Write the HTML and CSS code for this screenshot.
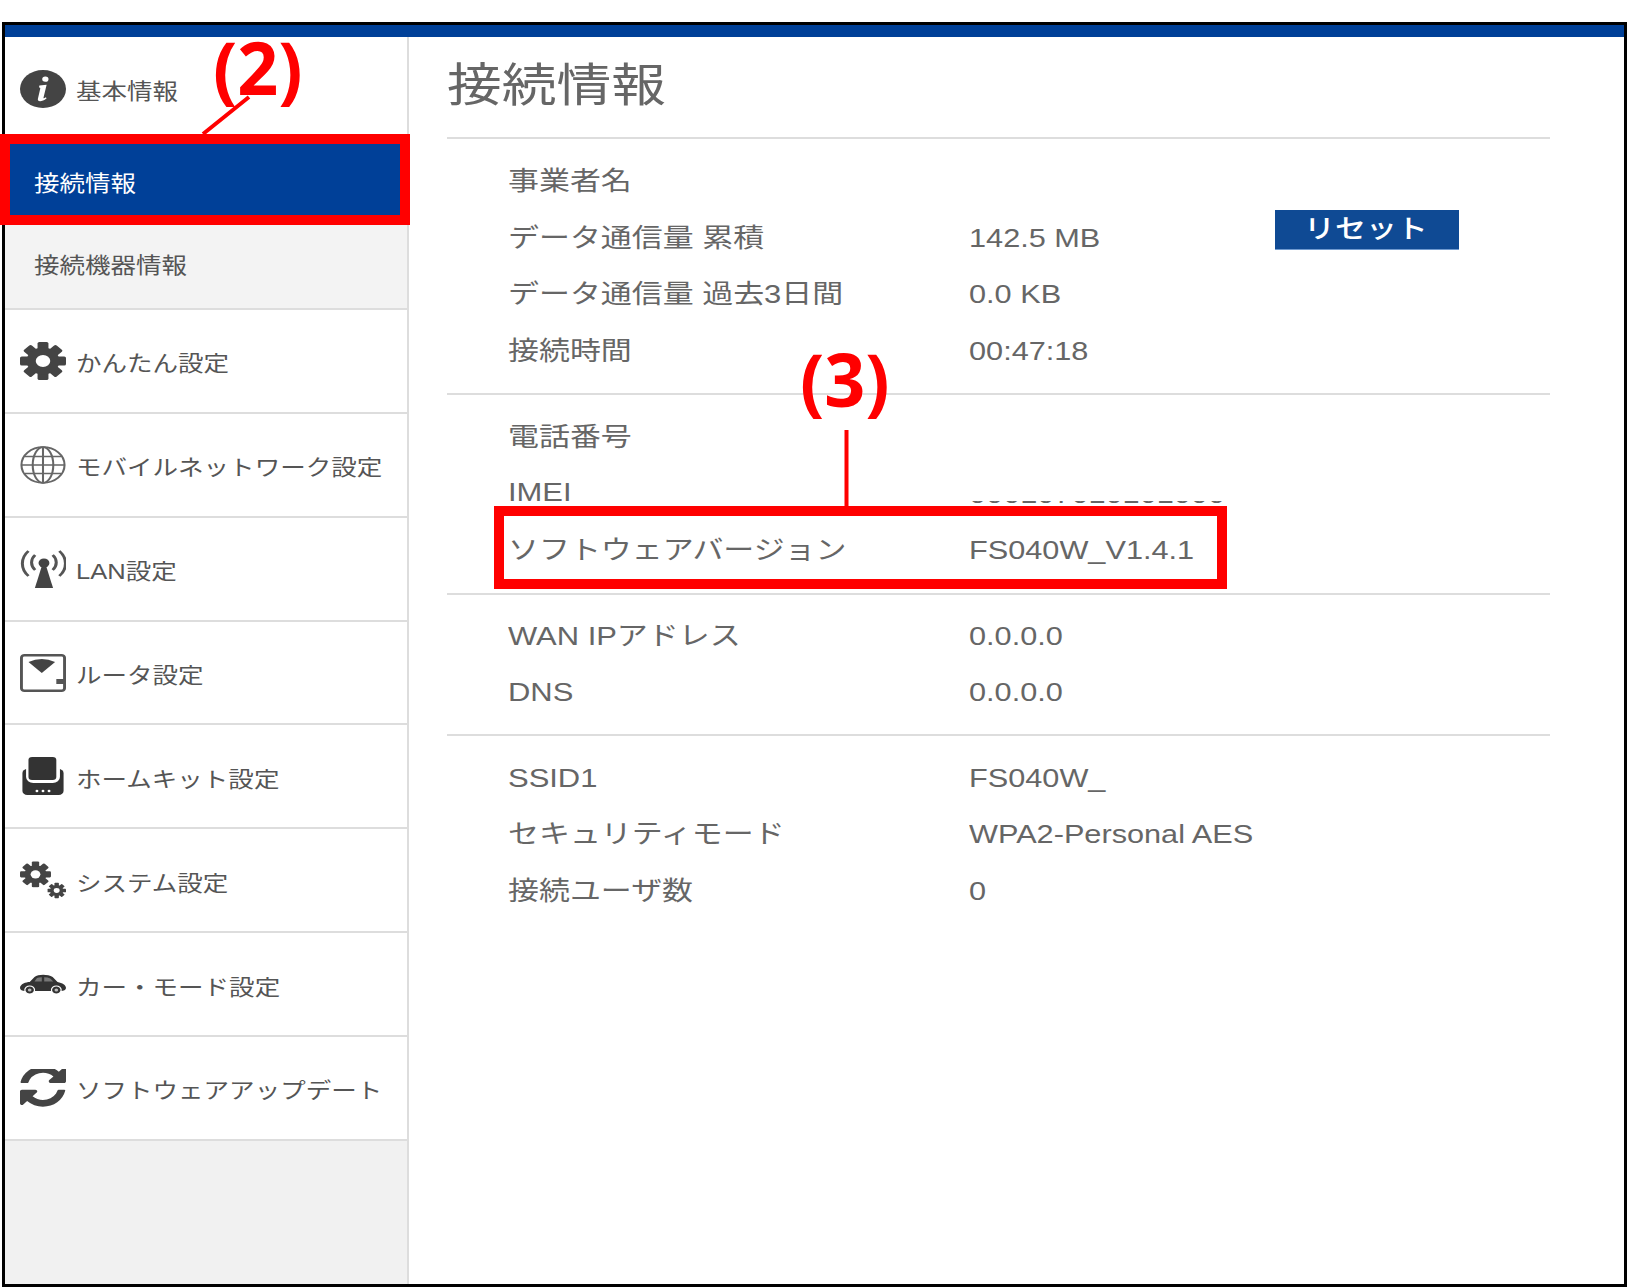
FILE: index.html
```html
<!DOCTYPE html>
<html lang="ja">
<head>
<meta charset="utf-8">
<title>接続情報</title>
<link rel="stylesheet" href="styles.css">
</head>
<body>
<svg class="defs" aria-hidden="true">
  <symbol id="gear" viewBox="0 0 38 38">
    <g fill="#444">
      <rect x="14.5" y="0" width="9" height="38" rx="1.5"/>
      <rect x="14.5" y="0" width="9" height="38" rx="1.5" transform="rotate(45 19 19)"/>
      <rect x="14.5" y="0" width="9" height="38" rx="1.5" transform="rotate(90 19 19)"/>
      <rect x="14.5" y="0" width="9" height="38" rx="1.5" transform="rotate(135 19 19)"/>
      <circle cx="19" cy="19" r="13.5"/>
    </g>
    <circle cx="19" cy="19" r="6" fill="#fff"/>
  </symbol>
</svg>

<div class="frame">
  <div class="topbar"></div>
  <div class="body">
    <nav class="side">
      <ul class="menu">
        <li class="item first">
          <svg class="ico" viewBox="0 0 38 38" preserveAspectRatio="none"><circle cx="19" cy="19" r="19" fill="#444"/><path d="M21 6.500a2.600 2.600 0 1 1-.1 5.200 2.600 2.600 0 0 1 .1-5.200zM16 15.500l6-.8-2.600 13c-.1.700.5.800 1.900-.4l.7.900c-2 2.300-4 3-5.400 3-1.500 0-2.100-1-1.800-2.500l1.900-10c.2-1-.2-1.300-1-1.300z" fill="#fff"/></svg>
          <span class="txt">基本情報</span>
        </li>
        <li class="sub active"><span class="txt">接続情報</span></li>
        <li class="sub"><span class="txt">接続機器情報</span></li>
        <li class="item">
          <svg class="ico" viewBox="0 0 38 38" preserveAspectRatio="none"><use href="#gear"/></svg>
          <span class="txt">かんたん設定</span>
        </li>
        <li class="item">
          <svg class="ico" viewBox="0 0 38 38" preserveAspectRatio="none" fill="none" stroke="#666" stroke-width="1.700"><circle cx="19" cy="19" r="17.800"/><ellipse cx="19" cy="19" rx="8.500" ry="17.800"/><path d="M19 1v36M1.500 19h35M4 10.500h30M4 27.500h30"/></svg>
          <span class="txt">モバイルネットワーク設定</span>
        </li>
        <li class="item">
          <svg class="ico" viewBox="0 0 38 38" preserveAspectRatio="none" fill="none" stroke="#555" stroke-width="2.500"><path d="M27 5a11 11 0 0 1 0 15M12.500 5a11 11 0 0 0 0 15M32.500 1a18 18 0 0 1 0 25M7 1a18 18 0 0 0 0 25"/><circle cx="19.800" cy="13" r="4.500" fill="#444" stroke="none"/><path d="M18.300 15h3l6 23h-15z" fill="#444" stroke="none"/></svg>
          <span class="txt">LAN設定</span>
        </li>
        <li class="item">
          <svg class="ico" viewBox="0 0 38 38" preserveAspectRatio="none"><rect x="1.200" y="1.200" width="35.600" height="35.600" rx="2.500" fill="#fff" stroke="#555" stroke-width="2.400"/><path d="M7 8Q18 2 29 8L18 19Z" fill="#444"/><rect x="30" y="25" width="8" height="5" fill="#555"/></svg>
          <span class="txt">ルータ設定</span>
        </li>
        <li class="item">
          <svg class="ico" viewBox="0 0 38 38" preserveAspectRatio="none"><rect x="2" y="12" width="34" height="26" rx="4" fill="#333"/><rect x="5" y="0" width="28" height="26" rx="6" fill="#fff"/><rect x="7" y="0" width="23" height="23" rx="3" fill="#333"/><circle cx="14" cy="34" r="1.200" fill="#fff"/><circle cx="19" cy="34" r="1.200" fill="#fff"/><circle cx="24" cy="34" r="1.200" fill="#fff"/></svg>
          <span class="txt">ホームキット設定</span>
        </li>
        <li class="item">
          <svg class="ico" viewBox="0 0 38 38" preserveAspectRatio="none"><use href="#gear" x="0" y="0" width="25.600" height="26.700"/><use href="#gear" x="22.600" y="21" width="15.400" height="17"/></svg>
          <span class="txt">システム設定</span>
        </li>
        <li class="item">
          <svg class="ico" viewBox="0 0 38 38" preserveAspectRatio="none"><path d="M0 23C0 19 5 17 8 17L12 12C15 9 23 9 27 12L31 17C35 18 38 20 38 23C38 25 36 26 34 26L4 26C2 26 0 25 0 23Z" fill="#333"/><path d="M14 13L12 16.500H18V12.300Q15.500 12.300 14 13ZM20 12.300V16.500H27.500L25 13.500Q23 12.300 20 12.300Z" fill="#777"/><circle cx="8" cy="25" r="4" fill="#333" stroke="#fff" stroke-width="1"/><circle cx="8" cy="25" r="1.500" fill="#bbb"/><circle cx="30" cy="25" r="4" fill="#333" stroke="#fff" stroke-width="1"/><circle cx="30" cy="25" r="1.500" fill="#bbb"/></svg>
          <span class="txt">カー・モード設定</span>
        </li>
        <li class="item">
          <svg class="ico" viewBox="0 110 1536 1440" preserveAspectRatio="none"><path fill="#444" d="M1511 928q0 5-1 7-64 268-268 434.500t-478 166.500q-146 0-282.500-55t-243.500-157l-129 129q-19 19-45 19t-45-19-19-45v-448q0-26 19-45t45-19h448q26 0 45 19t19 45-19 45l-137 137q71 66 161 102t187 36q134 0 250-65t186-179q11-17 53-117 8-23 30-23h192q13 0 22.500 9.500t9.500 22.500zm25-800v448q0 26-19 45t-45 19h-448q-26 0-45-19t-19-45 19-45l138-138q-148-137-349-137-134 0-250 65t-186 179q-11 17-53 117-8 23-30 23h-199q-13 0-22.500-9.500t-9.500-22.500v-7q65-268 270-434.500t480-166.500q146 0 284 55.500t245 156.500l130-129q19-19 45-19t45 19 19 45z"/></svg>
          <span class="txt">ソフトウェアアップデート</span>
        </li>
      </ul>
      <div class="side-fill"></div>
    </nav>

    <main class="main">
      <h1 class="title"><span class="txt">接続情報</span></h1>

      <section class="group first-group">
        <div class="row"><span class="label"><span class="txt">事業者名</span></span></div>
        <div class="row"><span class="label"><span class="txt">データ通信量 累積</span></span><span class="value"><span class="txt">142.5 MB</span></span><button class="reset" type="button"><span class="txt">リセット</span></button></div>
        <div class="row"><span class="label"><span class="txt">データ通信量 過去3日間</span></span><span class="value"><span class="txt">0.0 KB</span></span></div>
        <div class="row"><span class="label"><span class="txt">接続時間</span></span><span class="value"><span class="txt">00:47:18</span></span></div>
      </section>

      <section class="group second-group">
        <div class="row"><span class="label"><span class="txt">電話番号</span></span></div>
        <div class="row imei"><span class="label"><span class="txt">IMEI</span></span><span class="value masked"><span class="txt">000107010101000</span></span></div>
        <div class="row"><span class="label"><span class="txt">ソフトウェアバージョン</span></span><span class="value"><span class="txt">FS040W_V1.4.1</span></span></div>
      </section>

      <section class="group third-group">
        <div class="row"><span class="label"><span class="txt">WAN IPアドレス</span></span><span class="value"><span class="txt">0.0.0.0</span></span></div>
        <div class="row"><span class="label"><span class="txt">DNS</span></span><span class="value"><span class="txt">0.0.0.0</span></span></div>
      </section>

      <section class="group last-group">
        <div class="row"><span class="label"><span class="txt">SSID1</span></span><span class="value"><span class="txt">FS040W_</span></span></div>
        <div class="row"><span class="label"><span class="txt">セキュリティモード</span></span><span class="value"><span class="txt">WPA2-Personal AES</span></span></div>
        <div class="row"><span class="label"><span class="txt">接続ユーザ数</span></span><span class="value"><span class="txt">0</span></span></div>
      </section>
    </main>
  </div>
</div>

<div class="callout box2"></div>
<div class="callout box3"></div>
<svg class="leader" viewBox="0 0 1628 1288" aria-hidden="true"><path d="M249 97L203 134M846.500 430V506" stroke="#f00" stroke-width="4" fill="none"/></svg>
<span class="mark mark2">(2)</span>
<span class="mark mark3">(3)</span>
</body>
</html>
```

FILE: styles.css
```css
* { box-sizing: border-box; }
html, body { margin: 0; padding: 0; background: #fff; }
body {
  position: relative;
  width: 1628px;
  height: 1288px;
  overflow: hidden;
  font-family: "Liberation Sans", "Noto Sans CJK JP", sans-serif;
  color: #666;
}
.defs { display: none; }

.frame {
  position: absolute;
  left: 2px;
  top: 22px;
  width: 1625px;
  height: 1265px;
  border: 3px solid #000;
  display: flex;
  flex-direction: column;
}
.topbar {
  position: relative;
  z-index: 3;
  flex: none;
  height: 12px;
  background: #004098;
}
.body { flex: 1; display: flex; min-height: 0; }

.txt {
  display: inline-block;
  white-space: pre;
  transform: scaleX(1.18);
  transform-origin: left center;
}

/* sidebar */
.side {
  flex: none;
  width: 404px;
  border-right: 2px solid #ddd;
  display: flex;
  flex-direction: column;
  font-size: 21.500px;
  color: #555;
}
.side .txt { transform: scaleX(1.187); }
.menu { list-style: none; margin: 0; padding: 0; }
.item {
  display: flex;
  align-items: center;
  height: 103.860px;
  padding-left: 15px;
  border-bottom: 2px solid #ddd;
  background: #fff;
}
.item.first { height: 103px; border-bottom: 0; }
.ico { flex: none; width: 46px; height: 38px; margin-right: 10px; }
.item .txt { position: relative; top: 1px; }
.sub {
  display: flex;
  align-items: center;
  height: 85px;
  padding: 0 0 6px 29px;
  background: #f3f3f3;
  border-bottom: 2px solid #ddd;
}
.sub.active { background: #004098; color: #fff; border-bottom: 0; padding-bottom: 3px; }
.side-fill { flex: 1; background: #f1f1f1; }

/* main */
.main { flex: 1; padding-left: 38px; min-width: 0; }
.title {
  margin: 0;
  width: 1103px;
  height: 102px;
  padding-top: 18px;
  border-bottom: 2px solid #ddd;
  font-size: 46px;
  font-weight: 400;
  line-height: 60px;
}
.title .txt { transform: scaleX(1.19); }
.group {
  width: 1103px;
  padding: 14px 0 14px 61px;
  border-bottom: 2px solid #ddd;
  font-size: 26px;
}
.third-group { padding: 13px 0 13px 61px; }
.last-group { border-bottom: 0; }
.row {
  display: flex;
  height: 56.500px;
  line-height: 56px;
}
.imei { line-height: 52px; }
.label { flex: none; width: 461px; }
.label .txt, .reset .txt { transform: scaleX(1.19); }
.value { flex: none; width: 306px; }
.masked { position: relative; }
.masked .txt { position: relative; top: 2px; }
.masked::before {
  content: "";
  position: absolute;
  left: -2px;
  right: 0;
  top: 0;
  height: 35px;
  background: #fff;
  z-index: 1;
}
.reset {
  flex: none;
  width: 184px;
  height: 40px;
  margin: 0;
  padding: 0 0 0 29px;
  border: 0;
  border-bottom: 1px solid #6f9ad0;
  background: #0f4a94;
  color: #fff;
  font: inherit;
  font-weight: 500;
  line-height: 36px;
  text-align: left;
}

/* annotations laid over the screenshot */
.callout { position: absolute; z-index: 2; border: 10px solid #f00; }
.box2 { left: 0; top: 134px; width: 410px; height: 91px; }
.box3 { left: 494px; top: 506px; width: 733px; height: 83px; }
.leader { position: absolute; left: 0; top: 0; width: 1628px; height: 1288px; z-index: 2; pointer-events: none; }
.mark {
  position: absolute;
  z-index: 2;
  font-family: "Open Sans", "Liberation Sans", sans-serif;
  font-weight: 700;
  font-size: 74px;
  line-height: 80px;
  color: #f00;
  transform: scaleX(0.97);
  transform-origin: left center;
}
.mark2 { left: 213px; top: 27px; }
.mark3 { left: 800px; top: 339px; }
```
